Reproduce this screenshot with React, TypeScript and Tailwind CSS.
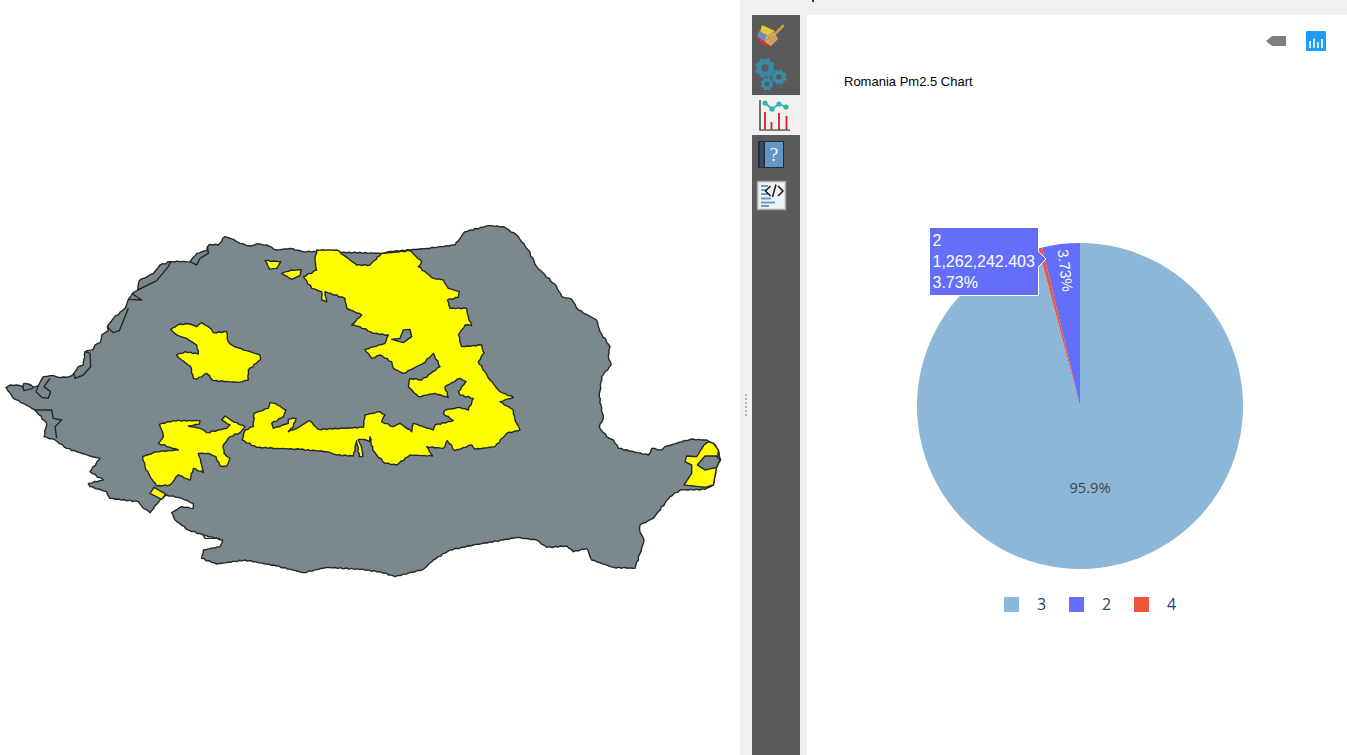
import React from 'react'

type Pt = [number, number]

// map points are in 3x page units, the eastern half was traced from x = 360
const east = (pts: Pt[]): Pt[] => pts.map(([x, y]) => [x + 1080, y])

const rough = (pts: Pt[], amount = 1.6): string => {
  const out: string[] = []
  pts.forEach(([x, y], i) => {
    const [nx, ny] = pts[(i + 1) % pts.length]
    const steps = Math.max(1, Math.floor(Math.hypot(nx - x, ny - y) / 8))
    for (let s = 0; s < steps; s++) {
      const t = s / steps
      const j = s === 0 ? 0 : amount
      const px = x + (nx - x) * t + Math.sin(i * 7.3 + s * 2.1) * j
      const py = y + (ny - y) * t + Math.cos(i * 3.7 + s * 2.9) * j
      out.push(`${px.toFixed(1)} ${py.toFixed(1)}`)
    }
  })
  return `M${out.join('L')}Z`
}

const line = (pts: Pt[]) => `M${pts.map(([x, y]) => `${x} ${y}`).join('L')}`

const outline: Pt[] = [
  [18, 533], [30, 525], [50, 525], [68, 530], [72, 520], [85, 522], [100, 532], [115, 527], [130, 500], [160, 497],
  [180, 503], [208, 500], [222, 490], [235, 470], [250, 465], [255, 425], [280, 418], [285, 405], [300, 398], [305, 375],
  [325, 362], [322, 350], [340, 325], [375, 295], [385, 268], [400, 248], [413, 240], [418, 212], [460, 190], [480, 165],
  [512, 155], [540, 155], [570, 155], [590, 130], [620, 122], [628, 103], [655, 105], [675, 80], [700, 88], [720, 100],
  [750, 108], [770, 102], [800, 105], [830, 120], [870, 115], [910, 125], [950, 125],
  ...east([
    [65, 130], [85, 125], [150, 120], [200, 115], [285, 105], [315, 65], [385, 47], [430, 50], [470, 75], [505, 120],
    [530, 170], [590, 230], [605, 260], [635, 268], [655, 300], [710, 330], [720, 365], [750, 410], [745, 440], [753, 465],
    [725, 500], [718, 560], [730, 625], [718, 652], [740, 680], [760, 690], [775, 715], [865, 735], [875, 715], [905, 720],
    [915, 710], [990, 688], [1040, 690], [1060, 700], [1075, 720], [1082, 750], [1070, 770], [1060, 825], [1035, 838], [960, 840],
    [930, 860], [880, 925], [840, 945], [840, 965], [852, 990], [845, 1015], [825, 1075], [760, 1072], [695, 1050], [680, 1015],
    [640, 1025], [620, 1008], [560, 1012], [530, 990], [470, 982], [430, 990], [340, 1005], [270, 1020], [220, 1050], [190, 1078],
    [105, 1100], [60, 1085], [0, 1078],
  ]),
  [980, 1072], [910, 1088], [830, 1068], [735, 1050], [650, 1062], [605, 1045], [610, 1020], [660, 1010], [668, 990], [610, 975],
  [565, 960], [525, 930], [515, 908], [545, 890], [580, 895], [580, 880], [545, 865], [500, 855], [480, 870], [450, 908],
  [430, 895], [415, 875], [330, 865], [320, 845], [270, 830], [265, 820], [310, 810], [270, 785], [300, 745], [270, 738],
  [200, 715], [165, 690], [132, 680], [140, 640], [105, 600], [70, 580], [40, 565],
]

const borderLines: Pt[][] = [
  [[68, 530], [72, 542], [100, 535]],
  [[115, 527], [108, 545], [125, 562], [145, 565], [152, 545], [132, 530], [150, 505]],
  [[222, 490], [225, 505], [250, 495], [272, 470], [270, 430], [255, 425]],
  [[322, 350], [340, 368], [358, 362], [375, 320], [385, 295]],
  [[385, 268], [425, 270], [395, 250]],
  [[413, 240], [470, 212], [505, 170], [512, 155]],
  [[570, 155], [590, 165], [600, 145], [625, 130], [622, 108]],
  [[105, 600], [155, 600], [160, 625], [185, 630], [165, 650], [170, 685]],
  [[610, 975], [615, 985], [660, 985]],
]

const westIsland: Pt[] = [
  [512, 358], [540, 342], [570, 342], [590, 350], [605, 338], [625, 350], [640, 368], [680, 365], [685, 395], [700, 408],
  [740, 422], [780, 435], [782, 448], [745, 480], [745, 510], [715, 517], [640, 512], [620, 490], [590, 508], [580, 505],
  [572, 470], [545, 450], [530, 435], [555, 425], [595, 432], [590, 405], [560, 385], [530, 375],
]

const banat: Pt[] = [
  [478, 643], [520, 632], [600, 632], [598, 642], [565, 648], [600, 655], [620, 668], [680, 655], [690, 645], [665, 630],
  [675, 618], [695, 632], [735, 650], [720, 668], [690, 680], [670, 705], [672, 730], [690, 745], [680, 768], [660, 768],
  [648, 740], [625, 730], [595, 730], [605, 765], [610, 788], [580, 775], [570, 810], [535, 795], [510, 825], [470, 828],
  [450, 800], [435, 770], [428, 740], [470, 725], [535, 720], [510, 712], [475, 700], [490, 680], [485, 660],
]

const tiny: Pt[] = [[450, 850], [462, 832], [497, 852], [485, 868]]
const northA: Pt[] = [[795, 152], [842, 155], [830, 175], [810, 178]]
const northB: Pt[] = [[845, 190], [875, 180], [905, 180], [900, 197], [875, 208]]

const carpathians: Pt[] = [
  [726, 690], [735, 660], [760, 650], [762, 610], [805, 595], [810, 578], [825, 580], [858, 600], [850, 620], [815, 640],
  [820, 655], [865, 640], [865, 628], [888, 625], [880, 650], [865, 665], [890, 655], [928, 632], [955, 658], [1090, 652],
  [1095, 615],
  ...east([
    [60, 605], [75, 615], [65, 635], [100, 650], [120, 640], [155, 665], [160, 640], [220, 660], [225, 645], [280, 632],
    [250, 610], [255, 600], [300, 592], [325, 600], [340, 565], [300, 555], [295, 545], [318, 515], [300, 505], [255, 530],
    [265, 563], [225, 550], [175, 560], [145, 530], [150, 505], [185, 510], [240, 470], [220, 430], [190, 460], [130, 490],
    [100, 475], [95, 455], [60, 435], [35, 445], [15, 418], [75, 400], [85, 375], [40, 370], [0, 350],
  ]),
  [1055, 345], [1085, 315], [1040, 295], [1035, 265], [975, 245], [980, 275], [965, 270], [965, 245], [935, 235], [910, 200],
  [950, 180], [945, 150], [950, 120], [1010, 120], [1050, 150], [1070, 165],
  ...east([
    [30, 165], [65, 130], [150, 122], [185, 155], [175, 170], [220, 205], [250, 210], [265, 235], [298, 245], [295, 262],
    [262, 270], [270, 295], [320, 295], [325, 320], [335, 347], [315, 345], [295, 375], [305, 410], [365, 405], [372, 430],
    [355, 455], [390, 510], [420, 545], [460, 562], [420, 575], [460, 600], [465, 630], [480, 660], [440, 670], [405, 710],
    [345, 718], [335, 705], [285, 722], [262, 692], [250, 715], [200, 710], [218, 738], [150, 735], [110, 765], [75, 760],
    [50, 735], [38, 720], [30, 680], [28, 695], [10, 688], [-5, 688], [5, 715], [8, 740], [-2, 740], [-10, 692], [-20, 738],
  ]),
  [1010, 735], [980, 725], [900, 718], [830, 715], [770, 712],
]

const innerHole = east([[95, 388], [120, 385], [130, 360], [150, 358], [155, 380], [130, 398]])
const delta = east([
  [972, 825], [995, 790], [995, 765], [975, 755], [980, 738], [1010, 740], [1032, 705], [1045, 695], [1060, 700], [1075, 720],
  [1070, 770], [1060, 825], [1035, 832],
])
const deltaHole = east([[1012, 765], [1035, 738], [1070, 738], [1080, 750], [1070, 772], [1035, 780]])

const RomaniaMap: React.FC = () => (
  <svg viewBox="0 -630 2220 2265" className="h-full w-full" strokeLinejoin="round">
    <g stroke="#23282a" strokeWidth={4.2}>
      <path d={rough(outline)} fill="#7b898e" />
      <path d={rough(westIsland)} fill="#ffff00" />
      <path d={rough(banat)} fill="#ffff00" />
      <path d={rough(tiny, 0)} fill="#ffff00" />
      <path d={rough(northA, 1)} fill="#ffff00" />
      <path d={rough(northB, 1)} fill="#ffff00" />
      <path d={rough(carpathians)} fill="#ffff00" />
      <path d={rough(innerHole, 0)} fill="#7b898e" />
      <path d={rough(delta, 0)} fill="#ffff00" />
      <path d={rough(deltaHole, 0)} fill="#7b898e" />
      {borderLines.map((pts, i) => (
        <path key={i} d={line(pts)} fill="none" />
      ))}
    </g>
  </svg>
)

const Gear: React.FC<{ cx: number; cy: number; r: number }> = ({ cx, cy, r }) => (
  <g stroke="#3a8aa8" fill="none">
    <circle cx={cx} cy={cy} r={r * 0.62} strokeWidth={r * 0.5} />
    {[0, 45, 90, 135].map((a) => (
      <line
        key={a}
        x1={cx - r}
        y1={cy}
        x2={cx + r}
        y2={cy}
        strokeWidth={r * 0.38}
        transform={`rotate(${a + 20} ${cx} ${cy})`}
        strokeDasharray={`${r * 0.4} ${r * 1.2} ${r * 0.4}`}
      />
    ))}
  </g>
)

const BrushIcon = () => (
  <svg viewBox="0 0 48 40" className="h-10 w-12">
    <path d="M31 11L23 19" stroke="#c99a4a" strokeWidth={2.6} strokeLinecap="round" />
    <path d="M10 10L23 16L15 21L8 17Z" fill="#e8c93a" />
    <path d="M7 16L15 20L14 28L5 22Z" fill="#6d8fb5" />
    <path d="M5 21L12 26L19 31L10 30Z" fill="#d0383a" />
    <path d="M14 21L22 17L26 24L19 31L13 27Z" fill="#d8a765" />
    <path d="M16 22L22 28M19 20L24 25M15 25L20 20M18 28L23 22" stroke="#b98a4c" strokeWidth={0.7} />
  </svg>
)

const GearsIcon = () => (
  <svg viewBox="0 0 48 40" className="h-10 w-12">
    <Gear cx={13} cy={13} r={10} />
    <Gear cx={27} cy={22} r={7.5} />
    <Gear cx={15} cy={29} r={6.5} />
  </svg>
)

const ChartIcon = () => (
  <svg viewBox="0 0 48 40" className="h-10 w-12">
    <path d="M8 5V35H38" fill="none" stroke="#1f1f1f" strokeWidth={1.2} />
    <path d="M13 17V35M19.5 27V35M27 18V35M34.5 21V35" stroke="#d4202c" strokeWidth={1.8} />
    <path d="M13 8L20 14L27 9L34 12" fill="none" stroke="#38b2ac" strokeWidth={1.8} />
    {[[13, 8], [20, 14], [27, 9], [34, 12]].map(([cx, cy]) => (
      <circle key={cx} cx={cx} cy={cy} r={2.6} fill="#38b2ac" />
    ))}
  </svg>
)

const BookIcon = () => (
  <svg viewBox="0 0 48 40" className="h-10 w-12">
    <rect x={6} y={6} width={26} height={27} fill="#222e3c" />
    <rect x={8} y={7} width={3.5} height={25} fill="#3a4c60" />
    <rect x={13} y={7} width={18} height={25} fill="#6594c6" />
    <text x={22} y={26} textAnchor="middle" fontSize={19} fill="#f4f7fb" fontFamily="'Liberation Serif', serif">
      ?
    </text>
  </svg>
)

const CodeIcon = () => (
  <svg viewBox="0 0 48 40" className="h-10 w-12">
    <rect x={5.5} y={6.5} width={28} height={28} fill="#eef2f6" stroke="#a9a9a9" strokeWidth={1.5} />
    <path d="M9 11H16M9 15H14M9 19H16M9 23.5H19M9 27.5H23M9 31H17" stroke="#6d9cc9" strokeWidth={2.2} />
    <path d="M18.5 11L13.5 16L18.5 21M26 11L31 16L26 21M24 9.5L20.5 22" fill="none" stroke="#1a1a1a" strokeWidth={1.5} />
  </svg>
)

const TagIcon = () => (
  <svg viewBox="0 0 20 10" className="h-2.5 w-5">
    <path d="M0 5L6 0H20V10H6Z" fill="#7f7f7f" />
  </svg>
)

const BarsIcon = () => (
  <svg viewBox="0 0 20 20" className="h-5 w-5">
    <rect width={20} height={20} rx={1} fill="#1e9bff" />
    <path d="M4 10V17M8 7.5V17M12 11V17M16 8V17" stroke="#fff" strokeWidth={1.6} />
    <path d="M4 4H4.01M8 4H8.01M12 4H12.01M16 4H16.01M4 7H4.01M12 7H12.01" stroke="#bfe2ff" strokeWidth={1.6} />
  </svg>
)

const polar = (deg: number, r = 163): Pt => {
  const a = (deg * Math.PI) / 180
  return [1080 + r * Math.sin(a), 406 - r * Math.cos(a)]
}

const slice = (from: number, to: number, large = 0) => {
  const [ax, ay] = polar(from)
  const [bx, by] = polar(to)
  return `M1080 406L${ax} ${ay}A163 163 0 ${large} 0 ${bx} ${by}Z`
}

const PieChart: React.FC = () => (
  <svg viewBox="807 210 540 370" className="block h-[370px] w-[540px]">
    <path d={slice(-14.76, -360, 1)} fill="#8db7d8" />
    <path d={slice(0, -13.43)} fill="#636efa" />
    <path d={slice(-13.43, -14.76)} fill="#ef553b" />
    <text x={1090} y={493} textAnchor="middle" fontSize={14.7} fill="#444" fontFamily="'Open Sans', sans-serif">
      95.9%
    </text>
    <text
      transform="translate(1057.5 250) rotate(83)"
      fontSize={15}
      fill="#fff"
      fontFamily="'Liberation Sans', sans-serif"
    >
      3.73%
    </text>
    <path d="M929.5 227.5H1038.5V251.5L1046 259L1038.5 266.5V295.5H929.5Z" fill="#636efa" stroke="#fff" strokeWidth={1} />
    <g fontSize={16} fill="#fff" fontFamily="'Liberation Sans', sans-serif">
      <text x={932.5} y={246}>2</text>
      <text x={932.5} y={267}>1,262,242.403</text>
      <text x={932.5} y={288}>3.73%</text>
    </g>
  </svg>
)

const legend = [
  { label: '3', color: 'bg-[#8db7d8]' },
  { label: '2', color: 'bg-[#636efa]' },
  { label: '4', color: 'bg-[#ef553b]' },
]

export default function App() {
  return (
    <div className="flex h-[755px] w-[1347px] overflow-hidden bg-white font-['Liberation_Sans',sans-serif]">
      <section className="h-full w-[740px] shrink-0">
        <RomaniaMap />
      </section>

      <section className="relative flex flex-1 flex-col bg-[#f0f0f0]">
        <div className="h-[15px] shrink-0 pl-[72px]">
          <div className="h-0.5 w-0.5 bg-[#333]" />
        </div>

        <div className="absolute left-[5px] top-[394px] flex flex-col gap-[2.4px]">
          {[0, 1, 2, 3, 4, 5].map((dot) => (
            <div key={dot} className="h-[1.6px] w-[2px] bg-[#b5b5b5]" />
          ))}
        </div>

        <div className="flex min-h-0 flex-1 pl-3">
          <nav className="flex w-12 shrink-0 flex-col bg-[#5a5a5a]">
            <BrushIcon />
            <GearsIcon />
            <div className="bg-[#f0f0f0]">
              <ChartIcon />
            </div>
            <BookIcon />
            <CodeIcon />
          </nav>

          <main className="ml-[7px] flex-1 bg-white">
            <div className="flex h-9 items-center justify-end gap-5 pr-[21px] pt-4">
              <TagIcon />
              <BarsIcon />
            </div>
            <h1 className="ml-[37px] mt-[22px] text-[13px] leading-[18px] font-normal text-black">
              Romania Pm2.5 Chart
            </h1>
            <div className="mt-[119px]">
              <PieChart />
            </div>
            <div className="mt-[13px] flex items-center pl-[197px] font-['Open_Sans',sans-serif] text-[16px] leading-[23px] text-[#2a3f5f]">
              {legend.map((item) => (
                <div key={item.label} className="flex w-[65px] items-center">
                  <span className={`h-[15px] w-[15px] ${item.color}`} />
                  <span className="ml-[18px]">{item.label}</span>
                </div>
              ))}
            </div>
          </main>
        </div>
      </section>
    </div>
  )
}
